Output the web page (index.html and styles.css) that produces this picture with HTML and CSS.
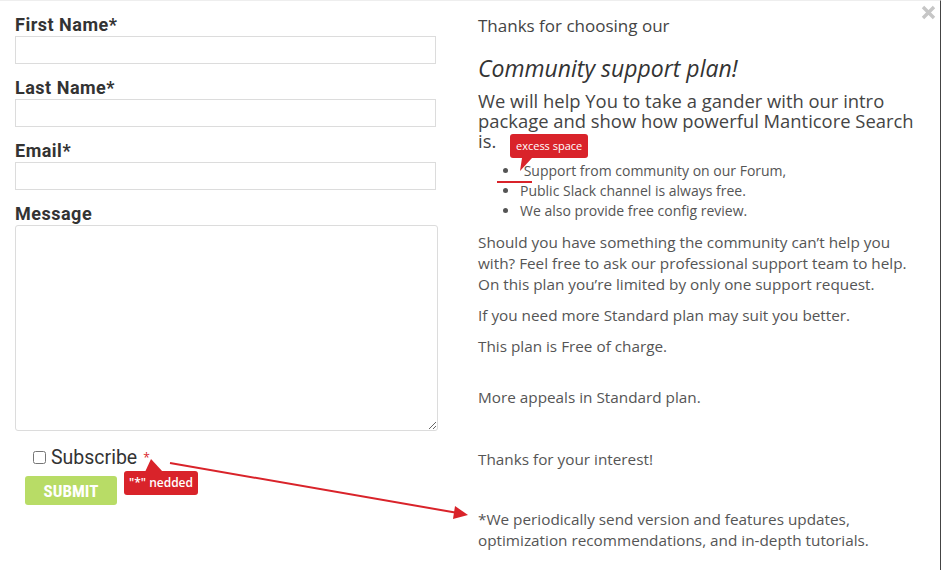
FILE: index.html
```html
<!DOCTYPE html>
<html>
<head>
<meta charset="utf-8">
<link rel="stylesheet" href="styles.css">
</head>
<body>
<div class="modal">
  <svg class="close" width="15" height="15" viewBox="0 0 15 15">
    <path d="M2 2 L13 13 M13 2 L2 13" stroke="#c6c6c6" stroke-width="3.4" stroke-linecap="butt"/>
  </svg>
  <form class="form">
    <label class="lbl">First Name*</label>
    <input class="field" type="text">
    <label class="lbl">Last Name*</label>
    <input class="field" type="text">
    <label class="lbl">Email*</label>
    <input class="field" type="text">
    <label class="lbl">Message</label>
    <textarea class="area"></textarea>
    <div class="sub-row">
      <input class="check" type="checkbox">
      <span class="sub-text">Subscribe</span>
      <span class="star">*</span>
    </div>
    <button class="submit" type="button">SUBMIT</button>
  </form>
  <div class="info">
    <p class="intro">Thanks for choosing our</p>
    <h2 class="plan">Community support plan!</h2>
    <p class="lead">We will help You to take a gander with our intro package and show how powerful Manticore Search is.</p>
    <ul class="list">
      <li>&nbsp;Support from community on our Forum,</li>
      <li>Public Slack channel is always free.</li>
      <li>We also provide free config review.</li>
    </ul>
    <p class="txt">Should you have something the community can’t help you with? Feel free to ask our professional support team to help. On this plan you’re limited by only one support request.</p>
    <p class="txt">If you need more Standard plan may suit you better.</p>
    <p class="txt">This plan is Free of charge.</p>
    <p class="txt gap">More appeals in Standard plan.</p>
    <p class="txt gap2">Thanks for your interest!</p>
    <p class="txt gap3">*We periodically send version and features updates, optimization recommendations, and in-depth tutorials.</p>
  </div>

  <div class="note note-space">excess space</div>
  <div class="uline uline-space"></div>
  <div class="note note-star">"*" nedded</div>
  <div class="uline uline-star"></div>
  <svg class="arrow" width="942" height="570" viewBox="0 0 942 570">
    <path d="M522 157 L532 157 L520 170 Z" fill="#d9232a"/>
    <path d="M151 458 L145 471 L163 471 Z" fill="#d9232a"/>
    <line x1="170" y1="462" x2="458" y2="512" stroke="#d9232a" stroke-width="2"/>
    <path d="M468 514 L455 505 L453 518 Z" fill="#d9232a"/>
  </svg>
</div>
</body>
</html>
```

FILE: styles.css
```css
* { box-sizing: border-box; }
html, body { margin: 0; padding: 0; background: #fff; }
body { width: 942px; height: 570px; overflow: hidden; }

.modal {
  position: relative;
  width: 941px;
  height: 570px;
  border-right: 1px solid #444;
  border-top: 1px solid #eee;
  display: flex;
  gap: 40px;
  padding: 0 0 0 15px;
  font-family: "Open Sans", sans-serif;
}

.close {
  position: absolute;
  left: 921px;
  top: 4px;
}

.form {
  width: 423px;
  display: flex;
  flex-direction: column;
  padding-top: 13px;
}

.lbl {
  font-family: Roboto, sans-serif;
  font-weight: bold;
  font-size: 18px;
  letter-spacing: 0.5px;
  line-height: 21px;
  color: #333;
  margin-bottom: 1px;
}

.field {
  width: 421px;
  height: 28px;
  border: 1px solid #dcdcdc;
  margin: 0 0 13px 0;
  padding: 0;
  background: #fff;
}

.area {
  width: 423px;
  height: 206px;
  border: 1px solid #dcdcdc;
  border-radius: 3px;
  margin: 0;
  resize: both;
}

.sub-row {
  display: flex;
  align-items: center;
  margin: 16px 0 0 17px;
  height: 20px;
}

.check {
  width: 13px;
  height: 13px;
  margin: 0 5px 0 1px;
}

.sub-text {
  font-family: Roboto, sans-serif;
  font-size: 19.5px;
  color: #333;
}

.star {
  color: #d9232a;
  font-size: 12px;
  margin-left: 6px;
}

.submit {
  margin: 9px 0 0 10px;
  width: 92px;
  height: 29px;
  background: #b8dc66;
  border: none;
  border-radius: 3px;
  color: #fff;
  font-family: "Liberation Sans Narrow", "Roboto Condensed", Roboto, sans-serif;
  font-weight: bold;
  font-size: 17px;
  padding: 0;
}

.info {
  width: 446px;
  color: #444;
  padding-top: 14px;
}

.info p { margin: 0; }

.intro { font-size: 17px; line-height: 22px; }

.plan {
  font-weight: normal;
  font-style: italic;
  font-size: 23px;
  line-height: 30px;
  margin: 16px 0 8px 0;
  color: #333;
}

.lead { font-size: 18.4px; line-height: 20px; }

.list {
  margin: 10px 0 11px 0;
  padding-left: 42px;
  font-size: 14px;
  line-height: 20px;
  color: #555;
}

.txt {
  font-size: 15.3px;
  line-height: 21px;
  color: #555;
  margin-bottom: 10px !important;
}

.gap { margin-top: 30px !important; }
.gap2 { margin-top: 41px !important; }
.gap3 { margin-top: 39px !important; }

.note {
  position: absolute;
  background: #d9232a;
  color: #fff;
  font-family: "Open Sans", sans-serif;
  font-size: 11px;
  border-radius: 3px;
  padding: 0 6px;
  line-height: 24px;
  height: 24px;
}
.note-space { left: 510px; top: 133px; }
.note-star { left: 124px; top: 470px; font-size: 12px; padding: 0 5px; font-weight: 600; }

.uline {
  position: absolute;
  height: 2px;
  background: #d9232a;
}
.uline-space { left: 497px; top: 180px; width: 35px; }
.uline-star { left: 131px; top: 470px; width: 32px; }

.arrow { position: absolute; left: 0; top: 0; pointer-events: none; }
```
